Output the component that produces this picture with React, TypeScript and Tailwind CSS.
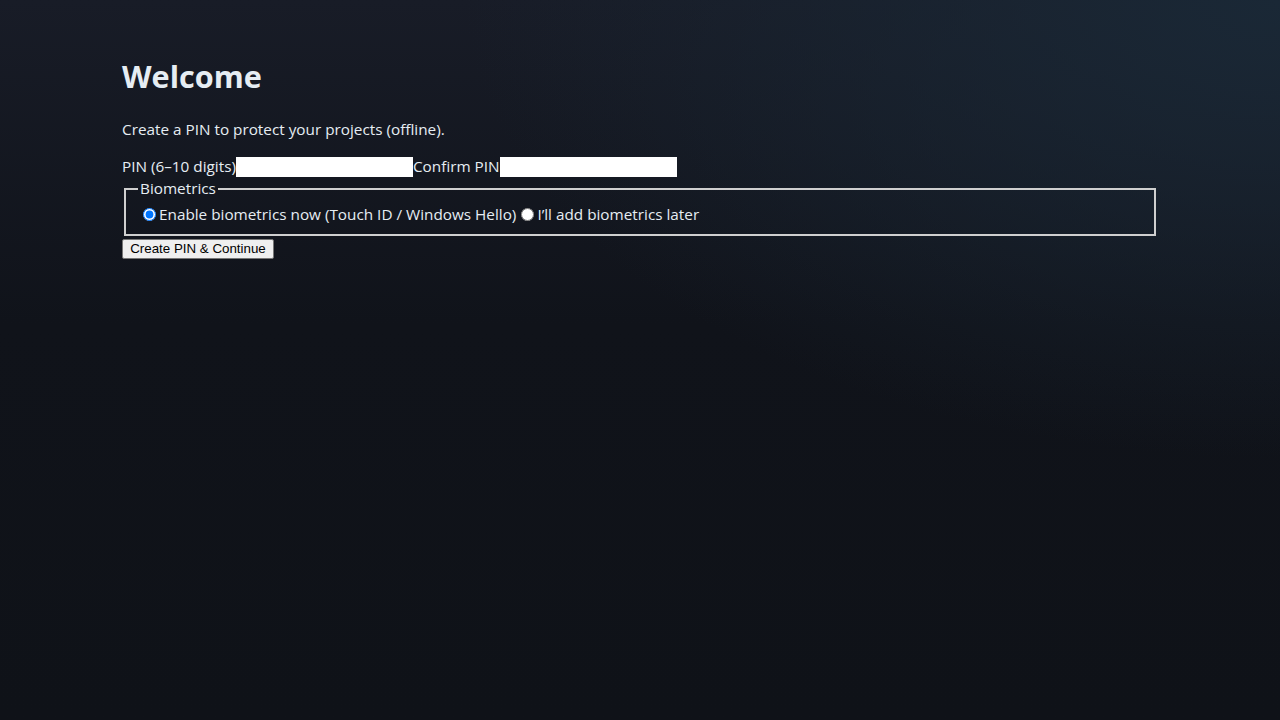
export default function App() {
  return (
    <div className="min-h-screen bg-[#0f1218] bg-[radial-gradient(ellipse_at_100%_0%,#1a2836_0%,rgba(15,18,24,0)_45%),linear-gradient(to_bottom,#181c27_0%,#10131a_45%,#0f1218_100%)] font-['Open_Sans',sans-serif] text-[15.3px] text-[#e6edf3]">
      <div className="max-w-[1036px] mx-auto pt-[55px]">
        <h1 className="text-[30.6px] font-bold leading-[42px] h-[42px]">Welcome</h1>
        <p className="mt-[22px] leading-[21px]">Create a PIN to protect your projects (offline).</p>

        {/* PIN fields */}
        <div className="mt-4 flex items-center h-[21px] leading-[19px]">
          <label htmlFor="pin">PIN (6–10 digits)</label>
          <input id="pin" type="password" className="w-[177px] h-[20px] bg-white text-black outline-none" />
          <label htmlFor="pin2">Confirm PIN</label>
          <input id="pin2" type="password" className="w-[177px] h-[20px] bg-white text-black outline-none" />
        </div>

        <fieldset className="mt-px mx-[2px] border-2 border-[#cfcfcf] px-3 pt-[5px] pb-[9px]">
          <legend className="px-[2px] leading-[21px]">Biometrics</legend>
          <div className="flex items-center leading-[21px]">
            <input type="radio" name="bio" defaultChecked className="w-[13px] h-[13px] ml-[5px] mr-[3px] accent-[#0075ff]" />
            <span>Enable biometrics now (Touch ID / Windows Hello)</span>
            <input type="radio" name="bio" className="w-[13px] h-[13px] ml-[5px] mr-[3px]" />
            <span>I’ll add biometrics later</span>
          </div>
        </fieldset>

        <button className="mt-[2px] h-[20px] w-[152px] border border-[#767676] bg-[#efefef] rounded-[2px] font-['Liberation_Sans',Arial,sans-serif] text-[13.33px] text-black leading-none">
          Create PIN &amp; Continue
        </button>
      </div>
    </div>
  );
}
